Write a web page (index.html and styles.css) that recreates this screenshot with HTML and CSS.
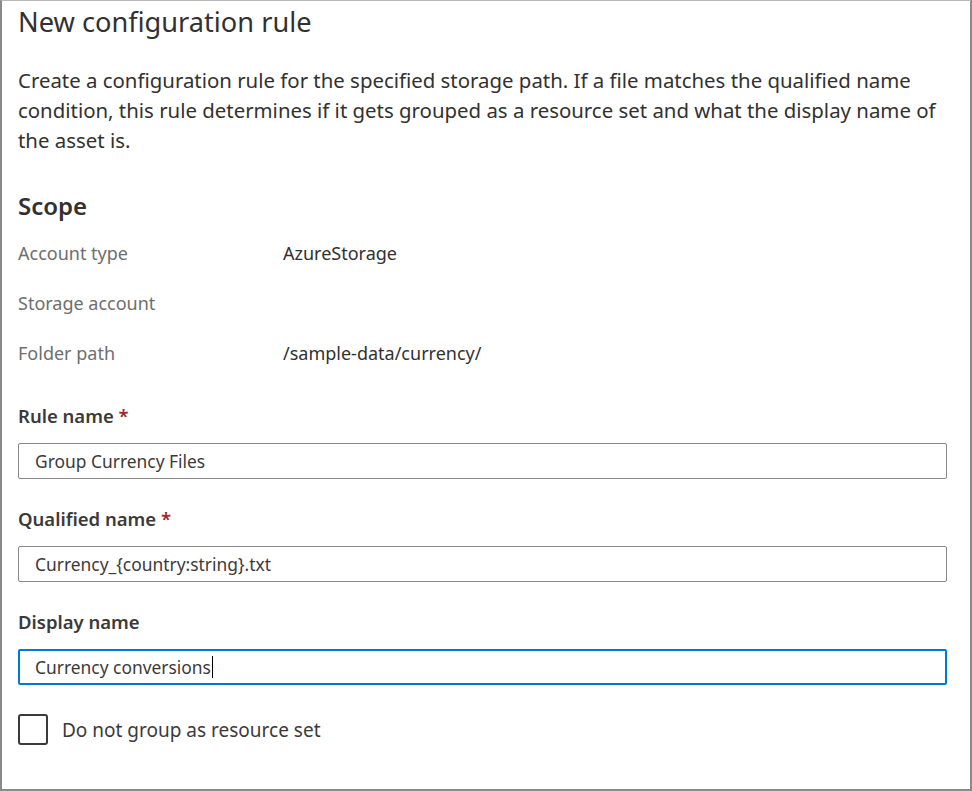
FILE: index.html
```html
<!DOCTYPE html>
<html>
<head>
<meta charset="utf-8">
<link rel="stylesheet" href="styles.css">
</head>
<body>
<div class="frame">
  <div class="panel">
    <h1 class="title">New configuration rule</h1>
    <p class="desc">Create a configuration rule for the specified storage path. If a file matches the qualified name condition, this rule determines if it gets grouped as a resource set and what the display name of the asset is.</p>
    <h2 class="section">Scope</h2>
    <div class="kv">
      <div class="kv-row"><span class="k">Account type</span><span class="v">AzureStorage</span></div>
      <div class="kv-row"><span class="k">Storage account</span><span class="v"></span></div>
      <div class="kv-row"><span class="k">Folder path</span><span class="v">/sample-data/currency/</span></div>
    </div>
    <div class="field first">
      <label class="label">Rule name <span class="req">*</span></label>
      <div class="input">Group Currency Files</div>
    </div>
    <div class="field">
      <label class="label">Qualified name <span class="req">*</span></label>
      <div class="input">Currency_{country:string}.txt</div>
    </div>
    <div class="field">
      <label class="label">Display name</label>
      <div class="input focused">Currency conversions<span class="caret"></span></div>
    </div>
    <div class="check-row">
      <span class="checkbox"></span>
      <span class="check-label">Do not group as resource set</span>
    </div>
  </div>
</div>
</body>
</html>
```
FILE: styles.css
```css
html, body {
  margin: 0;
  padding: 0;
  background: #ffffff;
}
body {
  font-family: "Noto Sans", "Open Sans", sans-serif;
  color: #323130;
}
.frame {
  width: 972px;
  height: 791px;
  box-sizing: border-box;
  border-left: 2px solid #8a8a8a;
  border-right: 2px solid #8a8a8a;
  border-bottom: 2px solid #8a8a8a;
  border-top: 1px solid #b8b8b8;
  overflow: hidden;
}
.panel {
  padding: 0 23px 0 16px;
}
.title {
  margin: 3px 0 0 0;
  font-size: 27.2px;
  font-weight: 400;
  line-height: 36px;
  color: #323130;
}
.desc {
  margin: 25px 0 0 0;
  font-size: 20.4px;
  line-height: 30px;
  color: #323130;
}
.section {
  margin: 35px 0 0 0;
  font-size: 24px;
  font-weight: 600;
  line-height: 32px;
  color: #323130;
}
.kv {
  margin-top: 6px;
}
.kv-row {
  display: grid;
  grid-template-columns: 265px 1fr;
  height: 50px;
  align-items: center;
  font-size: 18px;
}
.k {
  color: #6e6e6e;
}
.v {
  color: #323130;
}
.field {
  margin-top: 27px;
}
.field.first {
  margin-top: 25px;
}
.label {
  display: block;
  font-size: 18.5px;
  font-weight: 600;
  line-height: 26px;
  color: #3b3a39;
  margin: 0 0 14px 0;
}
.req {
  color: #a4262c;
}
.input {
  height: 36px;
  box-sizing: border-box;
  border: 1px solid #8a8886;
  border-radius: 2px;
  padding: 0 16px;
  display: flex;
  align-items: center;
  font-size: 17.4px;
  color: #3b3a39;
}
.input.focused {
  border: 2px solid #0078d4;
  padding: 0 15px;
}
.caret {
  display: inline-block;
  width: 1.5px;
  height: 22px;
  background: #000;
  margin-left: 1px;
}
.check-row {
  display: flex;
  align-items: center;
  margin-top: 29px;
  gap: 14px;
}
.checkbox {
  width: 30px;
  height: 31px;
  box-sizing: border-box;
  border: 2px solid #3b3a39;
  border-radius: 3px;
}
.check-label {
  font-size: 19px;
  color: #3b3a39;
}
```
